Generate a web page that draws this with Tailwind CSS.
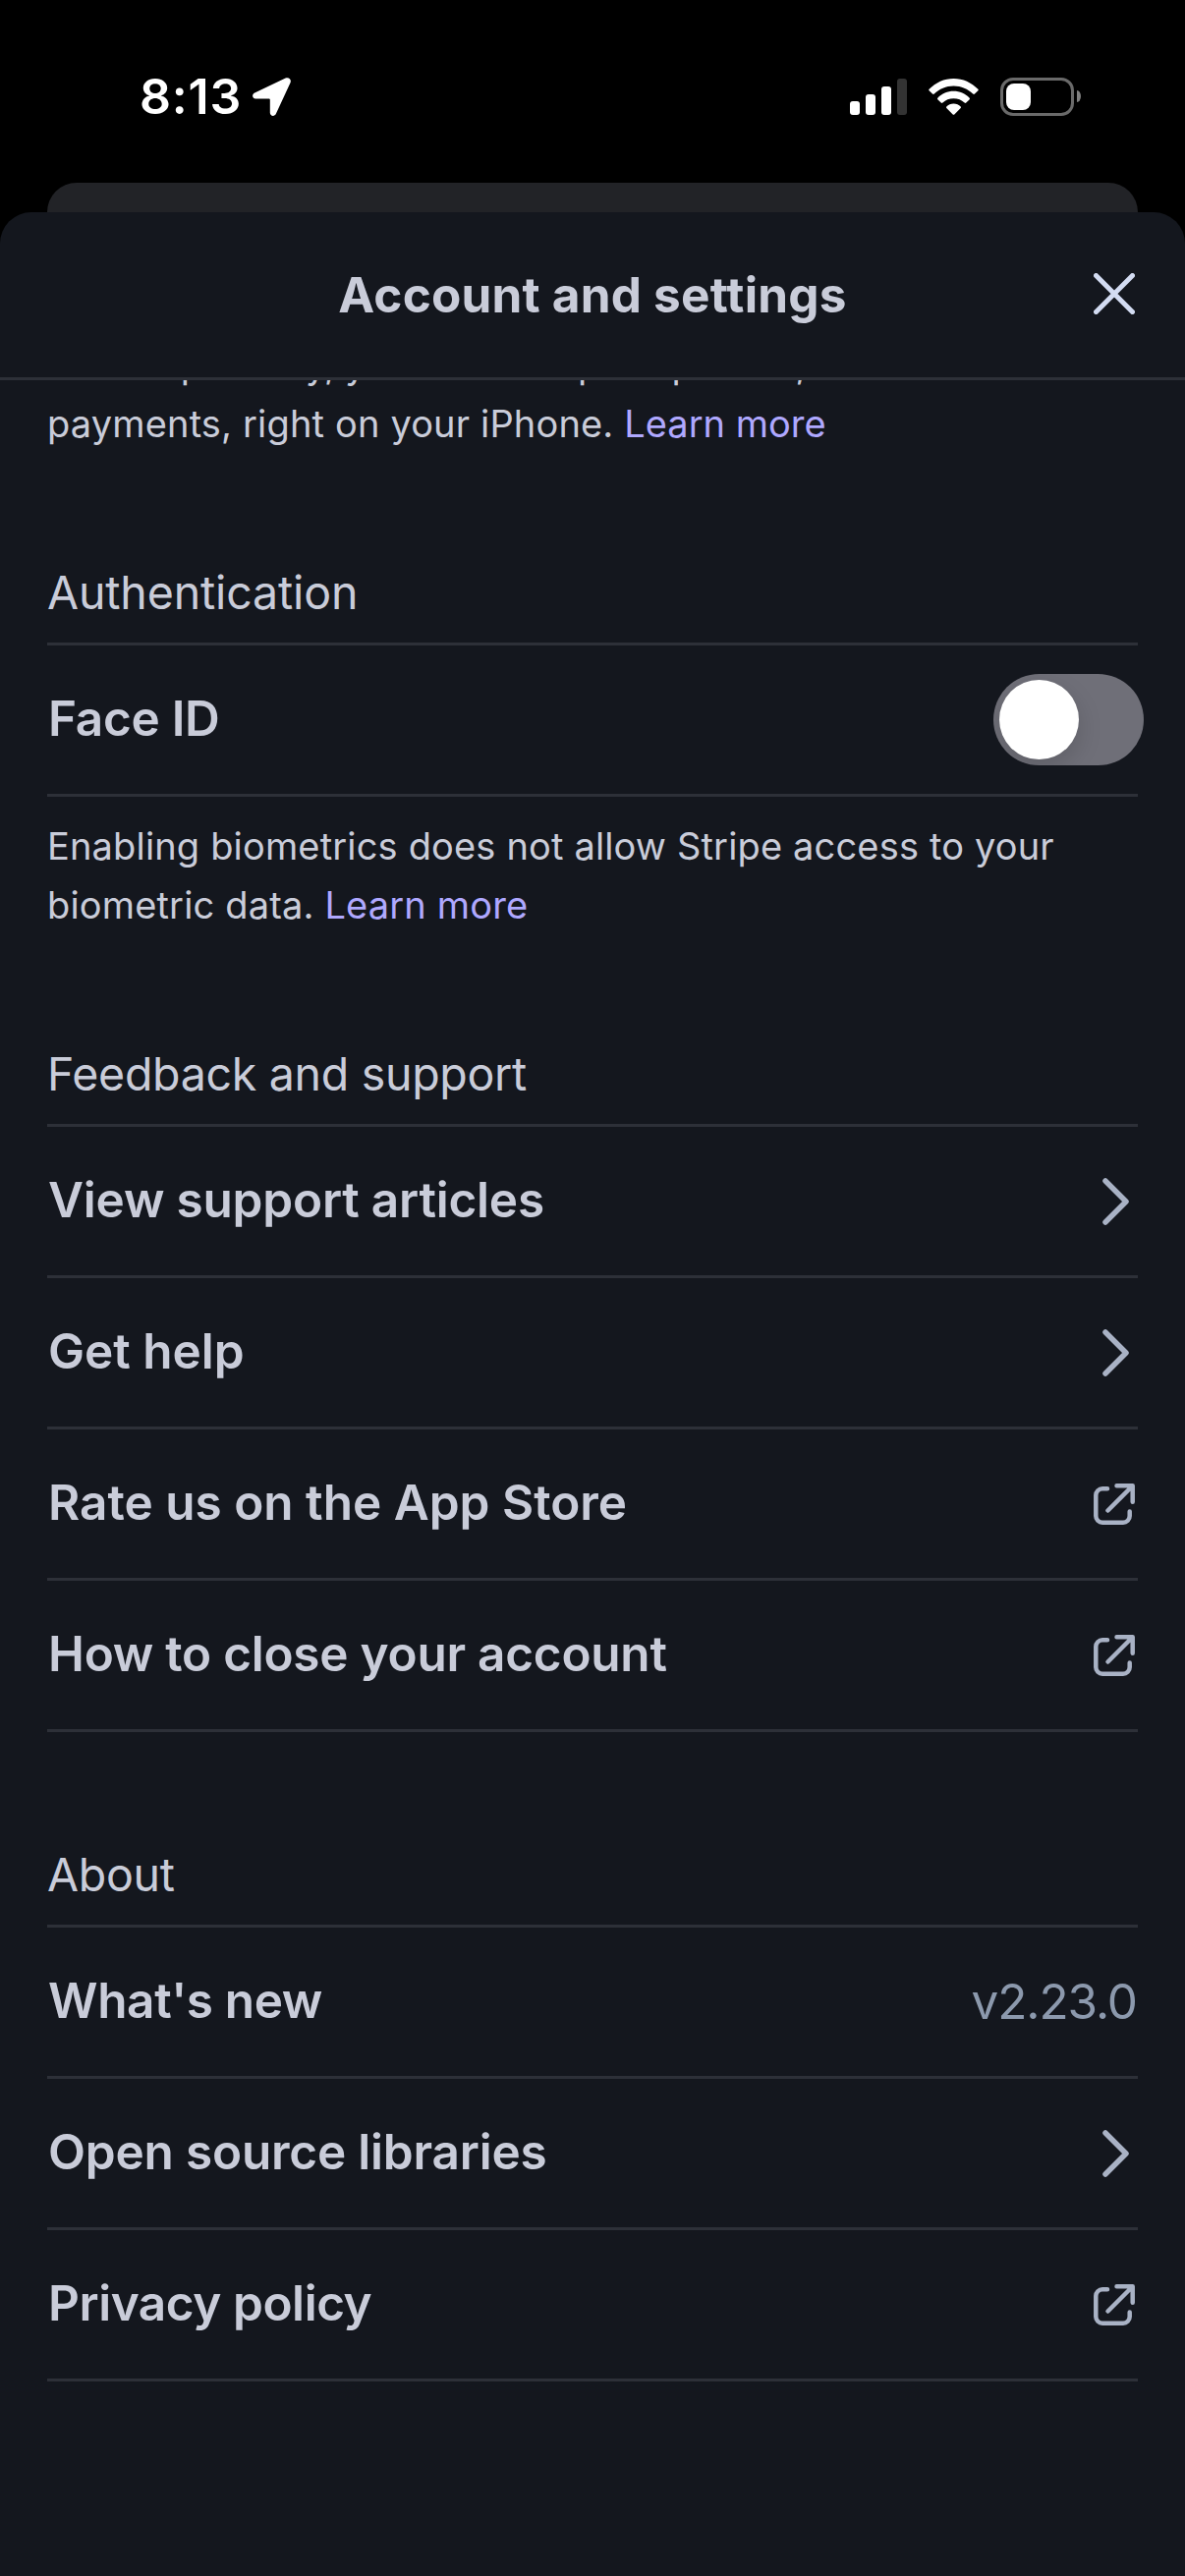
<!DOCTYPE html>
<html lang="en">
<head>
    <meta charset="UTF-8">
    <meta name="viewport" content="width=device-width, initial-scale=1.0">
    <title>Account and settings</title>
    <script src="https://cdn.jsdelivr.net/npm/@tailwindcss/browser@4"></script>
</head>
<body class="bg-black font-['Inter','Liberation_Sans',sans-serif] text-[#c9ccd9]">
    <div class="w-[1206px] h-[2622px] flex flex-col overflow-hidden">
        <!-- Status bar -->
        <div class="h-[186px] shrink-0 flex items-start justify-between pl-[142px] pr-[106px] pt-[68px] text-white">
            <div class="flex items-center h-[60px]">
                <span class="w-[115px] text-[50px] leading-[60px] font-semibold tracking-[0.8px]">8:13</span>
                <svg class="w-[39px] h-[39px]" viewBox="0 0 39 39" fill="currentColor">
                    <path d="M2.200 15.400 33.600.6c3-1.500 6.200 1 5 4.400L23.900 36.800c-1.400 3.300-6.100 2.500-6.100-1V22.500a1 1 0 0 0-1-1H3.200c-3.700 0-4.200-4.600-1-6.100Z"/>
                </svg>
            </div>
            <div class="flex items-center h-[60px]">
                <div class="flex items-end gap-[6px] h-[37px]">
                    <div class="w-[10px] h-[14px] rounded-[3px] bg-white"></div>
                    <div class="w-[10px] h-[21px] rounded-[3px] bg-white"></div>
                    <div class="w-[10px] h-[29px] rounded-[3px] bg-white"></div>
                    <div class="w-[10px] h-[37px] rounded-[3px] bg-[#333333]"></div>
                </div>
                <svg class="w-[51px] h-[37px] ml-[22px]" viewBox="0 0 51 37" fill="currentColor">
                    <path d="M.6 10.800C7.300 4 16 0 25.500 0s18.200 4 24.900 10.800c.5.500.4 1.100 0 1.500l-3.400 3.300c-.6.600-1.300.5-1.800 0C40 10.700 33.300 7.600 25.500 7.600S11 10.700 5.800 15.600c-.5.500-1.200.6-1.800 0L.6 12.300c-.4-.4-.5-1 0-1.500Z"/>
                    <path d="M9.300 19.700c4.400-4.500 9.900-6.900 16.200-6.900s11.800 2.400 16.200 6.900c.4.500.4 1.100 0 1.500l-3.400 3.300c-.6.600-1.200.5-1.700 0-3-2.700-6.700-4.200-11.100-4.200s-8.100 1.500-11.100 4.200c-.5.500-1.100.6-1.700 0l-3.400-3.300c-.4-.4-.4-1 0-1.500Z"/>
                    <path d="M18.300 28.500c1.900-2 4.300-3.100 7.200-3.100s5.300 1.100 7.200 3.100c.4.500.4 1 0 1.400l-6.400 6.500c-.5.500-1.100.5-1.600 0l-6.400-6.500c-.4-.4-.4-.9 0-1.400Z"/>
                </svg>
                <div class="flex items-center w-[75px] h-[39px] ml-[22px] rounded-[13px] border-3 border-[#6a6a6a] pl-[3px]">
                    <div class="w-[25px] h-[27px] rounded-[8px] bg-white"></div>
                </div>
                <div class="w-[4px] h-[12px] ml-[3px] rounded-r-[4px_6px] bg-[#808080]"></div>
            </div>
        </div>

        <!-- Card behind the sheet -->
        <div class="h-[60px] shrink-0 mx-12 -mb-[30px] rounded-t-[30px] bg-[#222327]"></div>

        <!-- Sheet -->
        <div class="relative flex-1 min-h-0 flex flex-col rounded-t-[32px] bg-[#14171e]">
            <header class="h-[171px] shrink-0 grid grid-cols-[1fr_auto_1fr] items-center px-12 border-b-3 border-[#2d3038]">
                <span></span>
                <h1 class="text-[49.5px] leading-[60px] font-bold tracking-[0.2px]">Account and settings</h1>
                <button class="justify-self-end mr-[3px] mb-[2px]">
                    <svg class="w-[42px] h-[42px]" viewBox="0 0 42 42" fill="none" stroke="#d3dcf2" stroke-width="5" stroke-linecap="round">
                        <path d="m2.500 2.500 37 37M39.500 2.500l-37 37"/>
                    </svg>
                </button>
            </header>

            <main class="flex-1 min-h-0 overflow-hidden px-12">
                <!-- Scrolled partly under the header -->
                <p class="-mt-[46px] text-[38px] leading-[60px] tracking-[0.16px] whitespace-nowrap"><span class="tracking-[-0.4px]">for compatibility, </span><span class="tracking-[-0.25px]">you can accept</span> in-person, contactless<br>payments, right on your iPhone. <a class="tracking-normal text-[#afa8ff]">Learn more</a></p>

                <!-- Authentication -->
                <section class="mt-28">
                    <h2 class="pb-[21px] text-[46.5px] leading-[60px] tracking-[-0.15px] border-b-3 border-[#2d3038]">Authentication</h2>
                    <div class="h-[154px] flex items-center justify-between border-b-3 border-[#2d3038]">
                        <span class="pl-px pb-[3px] text-[49.5px] leading-[60px] tracking-[-0.3px] font-semibold">Face ID</span>
                        <div class="w-[153px] h-[93px] -mr-[6px] p-[6px] rounded-full bg-[#6f6f78] overflow-hidden">
                            <div class="size-[81px] rounded-full bg-white shadow-[0_9px_24px_rgba(0,0,0,0.15)]"></div>
                        </div>
                    </div>
                    <p class="mt-5 text-[38px] leading-[60px] tracking-[0.16px] whitespace-nowrap">Enabling biometrics does not allow Stripe access to your<br>biometric data. <a class="text-[#afa8ff]">Learn more</a></p>
                </section>

                <!-- Feedback and support -->
                <section class="mt-28">
                    <h2 class="pb-[21px] text-[46.5px] leading-[60px] tracking-[-0.3px] border-b-3 border-[#2d3038]">Feedback and support</h2>
                    <div class="h-[154px] flex items-center justify-between border-b-3 border-[#2d3038]">
                        <span class="pl-px pb-[3px] text-[49.5px] leading-[60px] tracking-[-0.2px] font-semibold">View support articles</span>
                        <svg class="w-[27px] h-[48px] mr-[9px] mt-px" viewBox="0 0 27 48" fill="none" stroke="#a9b2c5" stroke-width="5.500" stroke-linecap="round" stroke-linejoin="round"><path d="M3 3l21 21L3 45"/></svg>
                    </div>
                    <div class="h-[154px] flex items-center justify-between border-b-3 border-[#2d3038]">
                        <span class="pl-px pb-[3px] text-[49.5px] leading-[60px] font-semibold">Get help</span>
                        <svg class="w-[27px] h-[48px] mr-[9px] mt-px" viewBox="0 0 27 48" fill="none" stroke="#a9b2c5" stroke-width="5.500" stroke-linecap="round" stroke-linejoin="round"><path d="M3 3l21 21L3 45"/></svg>
                    </div>
                    <div class="h-[154px] flex items-center justify-between border-b-3 border-[#2d3038]">
                        <span class="pl-px pb-[3px] text-[49.5px] leading-[60px] font-semibold">Rate us on the App Store</span>
                        <svg class="w-[42px] h-[42px] mr-[3px] mt-px" viewBox="0 0 42 42" fill="none" stroke="#a9b2c5" stroke-width="4.500" stroke-linecap="round" stroke-linejoin="round"><path d="M14 5.300H9a6.700 6.700 0 0 0-6.700 6.700v21A6.700 6.700 0 0 0 9 39.700h21a6.700 6.700 0 0 0 6.700-6.700v-4.500M23.500 2.300h16.200v16.500M38.500 3.500l-24 24"/></svg>
                    </div>
                    <div class="h-[154px] flex items-center justify-between border-b-3 border-[#2d3038]">
                        <span class="pl-px pb-[3px] text-[49.5px] leading-[60px] tracking-[-0.25px] font-semibold">How to close your account</span>
                        <svg class="w-[42px] h-[42px] mr-[3px] mt-px" viewBox="0 0 42 42" fill="none" stroke="#a9b2c5" stroke-width="4.500" stroke-linecap="round" stroke-linejoin="round"><path d="M14 5.300H9a6.700 6.700 0 0 0-6.700 6.700v21A6.700 6.700 0 0 0 9 39.700h21a6.700 6.700 0 0 0 6.700-6.700v-4.500M23.500 2.300h16.200v16.500M38.500 3.500l-24 24"/></svg>
                    </div>
                </section>

                <!-- About -->
                <section class="mt-[115px]">
                    <h2 class="pb-[21px] text-[46.5px] leading-[60px] tracking-[-0.3px] border-b-3 border-[#2d3038]">About</h2>
                    <div class="h-[154px] flex items-center justify-between border-b-3 border-[#2d3038]">
                        <span class="pl-px pb-[3px] text-[49.5px] leading-[60px] tracking-[-0.35px] font-semibold">What's new</span>
                        <span class="mr-px pb-[2px] text-[49.5px] leading-[60px] tracking-[-1.1px] text-[#8c99ad]">v2.23.0</span>
                    </div>
                    <div class="h-[154px] flex items-center justify-between border-b-3 border-[#2d3038]">
                        <span class="pl-px pb-[3px] text-[49.5px] leading-[60px] tracking-[-0.2px] font-semibold">Open source libraries</span>
                        <svg class="w-[27px] h-[48px] mr-[9px] mt-px" viewBox="0 0 27 48" fill="none" stroke="#a9b2c5" stroke-width="5.500" stroke-linecap="round" stroke-linejoin="round"><path d="M3 3l21 21L3 45"/></svg>
                    </div>
                    <div class="h-[154px] flex items-center justify-between border-b-3 border-[#2d3038]">
                        <span class="pl-px pb-[3px] text-[49.5px] leading-[60px] tracking-[-0.45px] font-semibold">Privacy policy</span>
                        <svg class="w-[42px] h-[42px] mr-[3px] mt-px" viewBox="0 0 42 42" fill="none" stroke="#a9b2c5" stroke-width="4.500" stroke-linecap="round" stroke-linejoin="round"><path d="M14 5.300H9a6.700 6.700 0 0 0-6.700 6.700v21A6.700 6.700 0 0 0 9 39.700h21a6.700 6.700 0 0 0 6.700-6.700v-4.500M23.500 2.300h16.200v16.500M38.500 3.500l-24 24"/></svg>
                    </div>
                </section>
            </main>
        </div>
    </div>
</body>
</html>
